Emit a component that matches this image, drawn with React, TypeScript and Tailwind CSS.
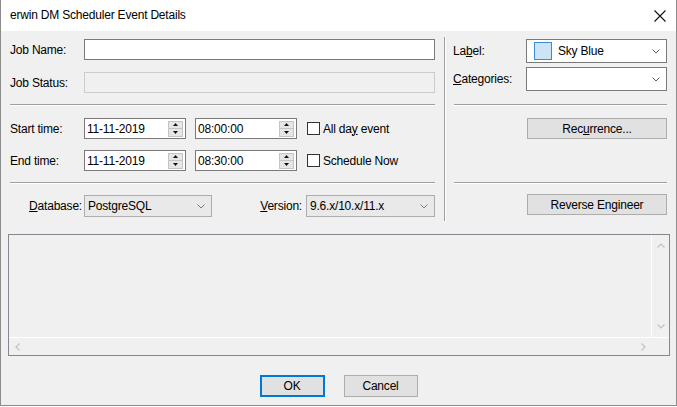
import React from 'react';

const font = "font-['Segoe_UI','Liberation_Sans',Arial,sans-serif]";

const Chevron = ({ color = '#5a5a5a' }: { color?: string }) => (
  <svg width="8" height="5" viewBox="0 0 8 5">
    <path d="M0.5 0.5 L4 4 L7.5 0.5" fill="none" stroke={color} strokeWidth="1" />
  </svg>
);

const Spin = () => (
  <div className="flex flex-col w-[15px] h-[16px] mr-[2px] border border-[#c4c4c4] bg-[#e6e6e6]">
    <div className="flex-1 flex items-center justify-center border-b border-[#c4c4c4]">
      <svg width="5" height="3" viewBox="0 0 5 3"><path d="M2.5 0 L5 3 L0 3 Z" fill="#111" /></svg>
    </div>
    <div className="flex-1 flex items-center justify-center">
      <svg width="5" height="3" viewBox="0 0 5 3"><path d="M0 0 L5 0 L2.5 3 Z" fill="#111" /></svg>
    </div>
  </div>
);

const SpinInput = ({ value }: { value: string }) => (
  <div className="w-[102px] h-[21px] bg-white border border-[#7a7a7a] flex items-center">
    <span className="flex-1 pl-[2px] leading-none">{value}</span>
    <Spin />
  </div>
);

const Check = ({ children }: { children: React.ReactNode }) => (
  <div className="flex items-center gap-[3px]">
    <div className="w-[13px] h-[13px] bg-white border border-[#333]" />
    <span>{children}</span>
  </div>
);

const HSep = () => <div className="h-[2px] border-t border-[#a0a0a0] border-b border-b-white" />;

const Button = ({ children, className = '' }: { children: React.ReactNode; className?: string }) => (
  <div className={`h-[21px] bg-[#e1e1e1] border border-[#adadad] flex items-center justify-center ${className}`}>
    {children}
  </div>
);

export default function App() {
  return (
    <div className={`${font} text-[12px] tracking-[-0.2px] text-black w-[677px] h-[406px] bg-[#f0f0f0] border-x border-b border-[#8c8c8c] flex flex-col`}>
      {/* title bar */}
      <div className="h-[31px] bg-white flex items-center justify-between pl-[9px] pr-[9px] shrink-0">
        <span className="mt-[-1px]">erwin DM Scheduler Event Details</span>
        <svg width="12" height="12" viewBox="0 0 12 12" className="mr-[1px]">
          <path d="M0.5 0.5 L11.5 11.5 M11.5 0.5 L0.5 11.5" stroke="#111" strokeWidth="1.1" />
        </svg>
      </div>

      {/* top section */}
      <div className="flex mt-[6px] pl-[9px] shrink-0">
        <div className="w-[425px] flex flex-col pb-[4px]">
          <div className="flex items-center mt-[2px]">
            <span className="w-[74px]">Job Name:</span>
            <div className="flex-1 h-[21px] bg-white border border-[#7a7a7a]" />
          </div>
          <div className="flex items-center mt-[12px]">
            <span className="w-[74px]">Job Status:</span>
            <div className="flex-1 h-[21px] bg-[#f0f0f0] border border-[#cccccc]" />
          </div>
          <div className="mt-[11px]"><HSep /></div>
          <div className="flex items-center mt-[12px]">
            <span className="w-[74px]">Start time:</span>
            <SpinInput value="11-11-2019" />
            <div className="w-[9px]" />
            <SpinInput value="08:00:00" />
            <div className="ml-[10px]">
              <Check>All da<u>y</u> event</Check>
            </div>
          </div>
          <div className="flex items-center mt-[11px]">
            <span className="w-[74px]">End time:</span>
            <SpinInput value="11-11-2019" />
            <div className="w-[9px]" />
            <SpinInput value="08:30:00" />
            <div className="ml-[10px]">
              <Check>Schedule Now</Check>
            </div>
          </div>
          <div className="mt-[11px]"><HSep /></div>
          <div className="flex items-center mt-[11px]">
            <span className="w-[74px] text-right pr-[2px]"><u>D</u>atabase:</span>
            <div className="w-[128px] h-[22px] bg-[#e9e9e9] border border-[#adadad] flex items-center justify-between pl-[3px] pr-[6px]">
              <span>PostgreSQL</span>
              <Chevron color="#7a7a7a" />
            </div>
            <span className="flex-1 text-right pr-[4px]"><u>V</u>ersion:</span>
            <div className="w-[129px] h-[22px] bg-[#e9e9e9] border border-[#adadad] flex items-center justify-between pl-[3px] pr-[6px]">
              <span>9.6.x/10.x/11.x</span>
              <Chevron color="#7a7a7a" />
            </div>
          </div>
        </div>

        <div className="w-[2px] ml-[9px] border-l border-[#a0a0a0] border-r border-r-white" />

        <div className="w-[214px] ml-[7px] flex flex-col">
          <div className="flex items-center mt-[2px]">
            <span className="w-[73px]">La<u>b</u>el:</span>
            <div className="w-[141px] h-[24px] bg-white border border-[#7a7a7a] flex items-center pl-[7px] pr-[6px]">
              <div className="w-[18px] h-[18px] bg-[#cde4f7] border border-[#3c8ad0]" />
              <span className="ml-[6px] flex-1">Sky Blue</span>
              <Chevron />
            </div>
          </div>
          <div className="flex items-center mt-[4px]">
            <span className="w-[73px]"><u>C</u>ategories:</span>
            <div className="w-[141px] h-[24px] bg-white border border-[#7a7a7a] flex items-center justify-end pr-[6px]">
              <Chevron />
            </div>
          </div>
          <div className="mt-[13px] ml-[1px]"><HSep /></div>
          <div className="flex justify-end mt-[12px]">
            <Button className="w-[140px]">Rec<u>u</u>rrence...</Button>
          </div>
          <div className="mt-[43px] ml-[1px]"><HSep /></div>
          <div className="flex justify-end mt-[10px]">
            <Button className="w-[140px]">Reverse Engineer</Button>
          </div>
        </div>
      </div>

      {/* list area */}
      <div className="mt-[13px] ml-[7px] w-[662px] h-[122px] border border-[#828790] flex flex-col shrink-0">
        <div className="flex flex-1">
          <div className="flex-1 border-r border-b border-white" />
          <div className="w-[17px] flex flex-col items-center justify-between py-[8px] border-b border-white">
            <svg width="8" height="5" viewBox="0 0 8 5"><path d="M0.5 4.5 L4 1 L7.5 4.5" fill="none" stroke="#c2c2c2" strokeWidth="1.2" /></svg>
            <svg width="8" height="5" viewBox="0 0 8 5"><path d="M0.5 0.5 L4 4 L7.5 0.5" fill="none" stroke="#c2c2c2" strokeWidth="1.2" /></svg>
          </div>
        </div>
        <div className="h-[17px] flex">
          <div className="flex-1 flex items-center justify-between px-[6px]">
            <svg width="5" height="8" viewBox="0 0 5 8"><path d="M4.5 0.5 L1 4 L4.5 7.5" fill="none" stroke="#c2c2c2" strokeWidth="1.2" /></svg>
            <svg width="5" height="8" viewBox="0 0 5 8"><path d="M0.5 0.5 L4 4 L0.5 7.5" fill="none" stroke="#c2c2c2" strokeWidth="1.2" /></svg>
          </div>
          <div className="w-[17px]" />
        </div>
      </div>

      {/* bottom buttons */}
      <div className="flex justify-center gap-[19px] mt-[19px] shrink-0">
        <div className="w-[65px] h-[22px] bg-[#e1e1e1] border-2 border-[#0078d7] flex items-center justify-center">OK</div>
        <div className="w-[74px] h-[22px] bg-[#e1e1e1] border border-[#adadad] flex items-center justify-center">Cancel</div>
      </div>
    </div>
  );
}
